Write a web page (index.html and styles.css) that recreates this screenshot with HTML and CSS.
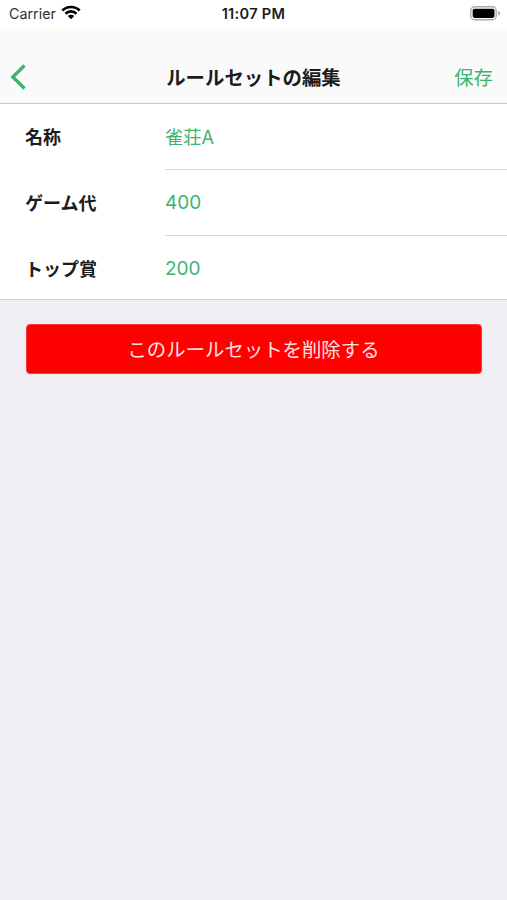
FILE: index.html
```html
<!DOCTYPE html>
<html lang="ja">
<head>
<meta charset="utf-8">
<title>ルールセットの編集</title>
<link rel="stylesheet" href="styles.css">
</head>
<body>
<header class="status">
  <div class="carrier"><span>Carrier</span>
    <svg class="wifi" width="20" height="15" viewBox="0 0 20 15" fill="none" stroke="#000" stroke-width="2.7"><path d="M1.300 5.500C6 .8 14 .8 18.700 5.500M4.500 8.700c3-3 8-3 11 0"/><path d="M6.800 11c1.800-1.700 4.600-1.700 6.400 0L10 14.200z" fill="#000" stroke="none"/></svg>
  </div>
  <div class="time">11:07 PM</div>
  <svg class="battery" width="31" height="15" viewBox="0 0 31 15"><rect x=".75" y=".75" width="25.500" height="13" rx="4" fill="#fff" stroke="#aaa" stroke-width="1.300"/><rect x="2.700" y="2.700" width="21.800" height="9.200" rx="1.800"/><path d="M28 5c3 1 3 3.500 0 4.500z" fill="#aaa"/></svg>
</header>
<nav class="nav">
  <svg class="back" width="16" height="26" viewBox="0 0 16 26" fill="none" stroke="#3cb371" stroke-width="3.300"><path d="M14.500 1.500 2.800 13l11.700 11.500"/></svg>
  <h1 class="title">ルールセットの編集</h1>
  <span class="save">保存</span>
</nav>
<main>
  <section class="form">
    <div class="row"><label class="label">名称</label><div class="value">雀荘A</div></div>
    <div class="row"><label class="label">ゲーム代</label><div class="value number">400</div></div>
    <div class="row"><label class="label">トップ賞</label><div class="value number">200</div></div>
  </section>
  <button class="delete">このルールセットを削除する</button>
</main>
</body>
</html>
```
FILE: styles.css
```css
* { box-sizing: border-box; }
body {
  margin: 0;
  min-height: 900px;
  background: #eeeef3;
  color: #1c1c1c;
  font-family: Inter, "Noto Sans CJK JP", sans-serif;
}
.status {
  display: grid;
  grid-template-columns: 1fr auto 1fr;
  align-items: center;
  height: 28px;
  padding: 0 6px 2px 9px;
  background: #fff;
  font-size: 14.3px;
}
.carrier { display: flex; align-items: center; gap: 5px; color: #333; }
.wifi { margin-top: -2px; }
.time { margin-right: 3px; padding-top: 2px; font-weight: 600; font-size: 14.6px; letter-spacing: .3px; }
.battery { justify-self: end; }
.nav {
  display: grid;
  grid-template-columns: 1fr auto 1fr;
  align-items: center;
  height: 76px;
  padding: 22px 14px 0 10px;
  background: #fafafa;
  border-bottom: 1px solid #c8c8c8;
}
.title { margin: 0; padding: 2px 0 0 4px; font-size: 19.4px; line-height: 28px; font-weight: 600; }
.save { justify-self: end; padding-top: 2px; color: #3cb371; font-size: 19.4px; line-height: 28px; font-weight: 400; }
.form { height: 196px; background: #fff; border-bottom: 1px solid #d0d0d4; }
.row { display: flex; height: 66px; padding-left: 25px; line-height: 66px; }
.label { width: 140px; padding-top: 1px; font-size: 18px; font-weight: 700; line-height: 66px; }
.value { flex: 1; border-bottom: 1px solid #dadadc; color: #3cb371; font-size: 18.2px; font-weight: 400; }
.number { font-size: 19px; }
.row:last-child .value { border-bottom: 0; }
.delete {
  display: block;
  width: 456px;
  height: 50px;
  margin: 24px auto 0;
  padding: 2px 0 0;
  border: 1px solid #f33;
  border-radius: 4px;
  background: #f00;
  color: #ffe0e0;
  font: 400 19.4px/46px Inter, "Noto Sans CJK JP", sans-serif;
}
```
